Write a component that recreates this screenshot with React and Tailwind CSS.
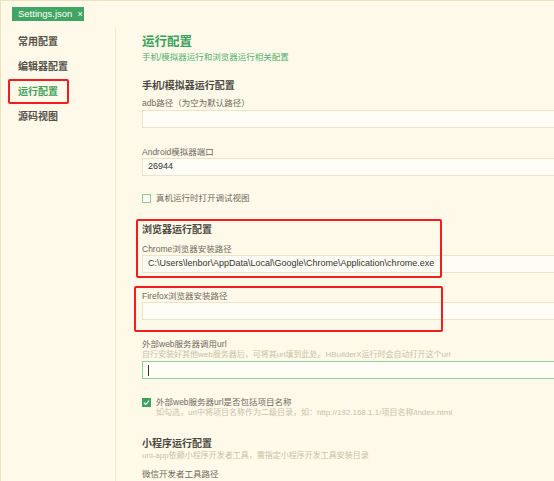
import React from 'react';

const Label = ({ children, className = '' }) => (
  <div className={`h-[12px] leading-[12px] text-[8.5px] text-[#6f6a5e] whitespace-nowrap ${className}`}>{children}</div>
);

const Hint = ({ children, className = '' }) => (
  <div className={`h-[10px] leading-[10px] text-[8px] text-[#c8c1ab] whitespace-nowrap ${className}`}>{children}</div>
);

const Field = ({ value, active, className = '' }) => (
  <div
    className={`h-[18px] w-[430px] shrink-0 flex items-center pl-[5px] text-[9px] text-[#333] bg-[#fffdf5] border whitespace-nowrap ${
      active ? 'border-[#8fd0a2]' : 'border-[#ece4c9]'
    } ${className}`}
  >
    {active ? <span className="w-px h-[11px] bg-[#333]" /> : value}
  </div>
);

const Section = ({ children, className = '' }) => (
  <div className={`h-[14px] leading-[14px] text-[10px] font-bold text-[#4b4942] ${className}`}>{children}</div>
);

export default function App() {
  return (
    <div
      className="w-[554px] h-[481px] overflow-hidden bg-[#fef9e8] border-t border-l border-[#eee3c0] flex flex-col"
      style={{ fontFamily: '"Liberation Sans", "Noto Sans CJK SC", sans-serif' }}
    >
      {/* tab bar */}
      <div className="h-[27px] shrink-0 flex items-start pt-[6px] pl-[11px]">
        <div className="h-[14px] w-[72px] pl-[6px] bg-[#43a563] text-white text-[9.5px] leading-[14px] flex items-center gap-[5px]">
          <span>Settings.json</span>
          <span className="text-[9px]">×</span>
        </div>
      </div>

      <div className="flex flex-1 min-h-0">
        {/* sidebar */}
        <div className="w-[115px] shrink-0 border-r border-[#f1e8cf] pt-[1px]">
          {['常用配置', '编辑器配置', '运行配置', '源码视图'].map((t) =>
            t === '运行配置' ? (
              <div
                key={t}
                className="ml-[7px] w-[61px] h-[25px] border-2 border-[#f21d1d] rounded-[2px] flex items-center pl-[8px] text-[10px] font-semibold text-[#3ea25e]"
              >
                {t}
              </div>
            ) : (
              <div key={t} className="h-[25px] flex items-center pl-[17px] text-[10px] font-semibold text-[#555249]">
                {t}
              </div>
            )
          )}
        </div>

        {/* main */}
        <div className="relative flex-1 pl-[26px] pt-[6px] flex flex-col">
          <div className="h-[16px] leading-[16px] text-[12.5px] font-bold text-[#3aa15c]">运行配置</div>
          <div className="h-[14px] leading-[14px] text-[8.5px] text-[#4fb06f]">手机/模拟器运行和浏览器运行相关配置</div>

          <Section className="mt-[15px]">手机/模拟器运行配置</Section>
          <Label className="mt-[4px]">adb路径（为空为默认路径）</Label>
          <Field className="mt-[1px]" />

          <Label className="mt-[18px]">Android模拟器端口</Label>
          <Field value="26944" />

          <div className="mt-[16px] h-[12px] flex items-center gap-[5px]">
            <span className="w-[9px] h-[9px] border border-[#8fcd9f] bg-[#fffdf5]" />
            <span className="text-[8.5px] text-[#6f6a5e]">真机运行时打开调试视图</span>
          </div>

          <Section className="mt-[19px]">浏览器运行配置</Section>
          <Label className="mt-[6px]">Chrome浏览器安装路径</Label>
          <Field value="C:\Users\lenbor\AppData\Local\Google\Chrome\Application\chrome.exe" />

          <Label className="mt-[17px]">Firefox浏览器安装路径</Label>
          <Field />

          <Label className="mt-[18px]">外部web服务器调用url</Label>
          <Hint>自行安装好其他web服务器后，可将其url填到此处。HBuilderX运行时会自动打开这个url</Hint>
          <Field active className="mt-[1px]" />

          <div className="mt-[17px] h-[12px] flex items-center gap-[5px]">
            <span className="w-[9px] h-[9px] bg-[#3ba35b] flex items-center justify-center">
              <svg width="7" height="7" viewBox="0 0 8 8">
                <path d="M1 4.2 L3.2 6.2 L7 1.8" stroke="white" strokeWidth="1.4" fill="none" />
              </svg>
            </span>
            <span className="text-[8.5px] text-[#6f6a5e]">外部web服务器url是否包括项目名称</span>
          </div>
          <Hint className="ml-[14px]">如勾选，url中将项目名称作为二级目录，如：http://192.168.1.1/项目名称/index.html</Hint>

          <Section className="mt-[19px]">小程序运行配置</Section>
          <Hint>uni-app依赖小程序开发者工具，需指定小程序开发工具安装目录</Hint>
          <Label className="mt-[7px]">微信开发者工具路径</Label>

          {/* annotation boxes */}
          <div className="absolute left-[20px] top-[191px] w-[306px] h-[59px] border-2 border-[#f21d1d] rounded-[2px] pointer-events-none" />
          <div className="absolute left-[18px] top-[258px] w-[309px] h-[46px] border-2 border-[#f21d1d] rounded-[2px] pointer-events-none" />
        </div>
      </div>
    </div>
  );
}
